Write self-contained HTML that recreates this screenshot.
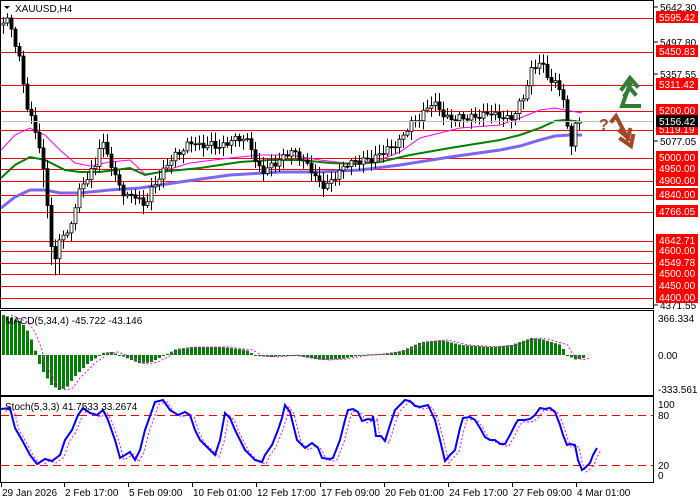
<!DOCTYPE html>
<html><head><meta charset="utf-8"><style>
html,body{margin:0;padding:0;background:#fff;width:700px;height:500px;overflow:hidden}
svg{display:block;font-family:"Liberation Sans",sans-serif}
</style></head><body>
<svg id="s" width="700" height="500" viewBox="0 0 700 500" xmlns="http://www.w3.org/2000/svg">
<rect width="700" height="500" fill="#fff"/>
<g id="lines"></g>
<g id="ma"></g>
<g id="candles"></g>
<g id="macd"></g>
<g id="stoch"></g>
<g fill="none" stroke="#000" stroke-width="1">
<rect x="0.5" y="0.5" width="653" height="308"/>
<rect x="0.5" y="310.5" width="653" height="85"/>
<rect x="0.5" y="396.5" width="653" height="86"/>
</g>
<line x1="1" y1="121.5" x2="653" y2="121.5" stroke="#c0c0c0"/>
<g id="labels" font-size="10"></g>
<text x="15" y="12" font-size="10" fill="#000">XAUUSD,H4</text>
<path d="M4,6 L10,6 L7,9Z" fill="#000"/>
<text x="5" y="324" font-size="10">MACD(5,34,4) -45.722 -43.146</text>
<text x="5" y="410" font-size="10">Stoch(5,3,3) 41.7533 33.2674</text>
<g fill="none" stroke="#2e7d32" stroke-width="4" stroke-linejoin="miter" stroke-linecap="square">
<path d="M639,106 L622,106 L630,84"/>
<path d="M622,89 L630,78 L637,86"/>
<path d="M625,95 L630,88 L635,94"/>
</g>
<text x="599" y="130" font-size="16" font-weight="bold" fill="#a0472a">?</text>
<g fill="none" stroke="#a0472a" stroke-width="4" stroke-linejoin="miter" stroke-linecap="square">
<path d="M612,121 L616,116 L628,139"/>
<path d="M621,139 L631,146 L633,136"/>
<path d="M620,131 L628,138 L630,130"/>
</g>
</svg>
<script>
(function(){
var NS="http://www.w3.org/2000/svg";
function el(p,t,a,txt){var e=document.createElementNS(NS,t);for(var k in a)e.setAttribute(k,a[k]);if(txt!==undefined)e.textContent=txt;document.getElementById(p).appendChild(e);return e;}
function interp(pts,x){if(x<=pts[0][0])return pts[0][1];for(var i=1;i<pts.length;i++){if(x<=pts[i][0]){var a=pts[i-1],b=pts[i];return a[1]+(b[1]-a[1])*(x-a[0])/(b[0]-a[0]);}}return pts[pts.length-1][1];}
function poly(p,pts,attrs){var d="M"+pts.map(function(q){return q[0]+","+q[1]}).join(" L");attrs.d=d;attrs.fill="none";el(p,"path",attrs);}
var hl=[18,52,85,111,130,158,169,181,195,212,241,251,263,274,286,298];
hl.forEach(function(y){el("lines","line",{x1:1,x2:653,y1:y+.5,y2:y+.5,stroke:"#f00","stroke-width":1});});
poly("ma",[[1,150],[15,135],[30,128],[45,135],[60,150],[75,163],[90,166],[110,162],[130,160],[145,174],[160,172],[190,163],[230,158],[260,155],[290,155],[320,160],[345,163],[360,162],[380,160],[400,152],[420,138],[460,128],[500,125],[520,118],[540,110],[555,108],[565,110],[582,113]],{stroke:"#f0f","stroke-width":1});
poly("ma",[[1,178],[15,165],[30,157],[45,160],[65,170],[80,172],[100,172],[130,168],[145,175],[160,172],[200,168],[240,162],[270,160],[300,160],[330,163],[355,164],[380,162],[410,155],[450,148],[500,140],[520,135],[540,128],[555,121],[565,120],[582,122]],{stroke:"#008000","stroke-width":2});
poly("ma",[[1,208],[15,197],[30,190],[45,190],[60,193],[80,193],[110,190],[140,188],[180,182],[230,175],[280,172],[320,172],[360,170],[400,165],[450,157],[500,150],[520,146],[540,140],[555,136],[570,135],[582,135]],{stroke:"#7b68ee","stroke-width":3});
var price=[[2,25],[6,20],[10,28],[14,40],[18,48],[22,75],[26,100],[30,110],[34,130],[38,140],[42,165],[46,200],[50,240],[54,270],[58,245],[62,230],[66,235],[70,225],[74,205],[78,190],[85,180],[95,170],[100,145],[105,150],[110,162],[115,175],[120,182],[125,195],[132,192],[140,205],[145,210],[150,195],[155,185],[160,175],[168,158],[175,152],[183,150],[190,145],[200,150],[210,142],[220,143],[230,140],[240,142],[250,146],[256,165],[262,168],[270,162],[280,160],[290,155],[300,160],[310,165],[318,178],[325,185],[332,182],[340,175],[348,165],[356,160],[365,155],[372,157],[380,155],[390,152],[398,145],[405,130],[410,120],[418,116],[425,110],[432,105],[438,112],[445,120],[452,118],[460,113],[467,115],[474,116],[481,120],[488,116],[495,117],[502,115],[510,115],[516,108],[520,100],[525,95],[530,75],[535,70],[540,65],[545,72],[550,80],[555,80],[560,84],[563,96],[566,115],[569,150],[572,140],[575,125],[578,130],[582,120]];
var prev=interp(price,2);
for(var x=3;x<=582;x+=4){
 var c=interp(price,x)+Math.sin(x*1.7)*4+Math.sin(x*0.53)*3;
 var o=prev; prev=c;
 var tp=Math.min(o,c),bt=Math.max(o,c);
 var hi=tp-2-Math.abs(Math.sin(x*2.3))*7, lo=bt+2+Math.abs(Math.cos(x*1.1))*7;
 if(x>40&&x<60)lo+=10;
 el("candles","line",{x1:x+.5,x2:x+.5,y1:hi,y2:lo,stroke:"#000","stroke-width":1});
 var h=Math.max(bt-tp,1);
 el("candles","rect",{x:x-1,y:tp,width:3,height:h,fill:(c<o?"#fff":"#000"),stroke:"#000","stroke-width":0.8});
}
var mz=355;
var mp=[[3,315],[10,318],[20,322],[27,332],[33,347],[37,362],[42,372],[50,385],[58,390],[65,388],[72,378],[80,370],[88,362],[95,358],[100,353],[110,352],[118,355],[130,360],[140,364],[150,362],[160,357],[175,349],[190,347],[220,347],[245,350],[255,356],[270,357],[290,355],[320,360],[340,359],[360,355],[380,354],[400,351],[420,342],[440,340],[460,345],[490,347],[510,345],[530,338],[540,339],[560,345],[565,355],[575,360],[582,358]];
for(var x2=2;x2<=582;x2+=4){var v=interp(mp,x2);var t=Math.min(v,mz),b=Math.max(v,mz);el("macd","rect",{x:x2,y:t,width:3,height:Math.max(b-t,1),fill:"#008000"});}
poly("macd",mp.map(function(p){return [p[0]+8,p[1]];}),{stroke:"#f0f","stroke-width":1,"stroke-dasharray":"2,2"});
[415.5,465.5].forEach(function(y){el("stoch","line",{x1:1,x2:653,y1:y,y2:y,stroke:"#e00","stroke-width":1,"stroke-dasharray":"8,5"});});
var st=[[1,409],[10,408],[15,428],[22,440],[30,455],[37,464],[45,459],[52,461],[60,455],[65,440],[72,430],[78,415],[83,408],[90,413],[97,415],[103,410],[108,420],[115,440],[120,458],[125,455],[130,452],[135,460],[140,450],[145,430],[155,402],[163,400],[170,410],[178,415],[185,412],[190,415],[195,430],[200,440],[205,445],[210,450],[215,455],[220,440],[225,413],[230,418],[235,430],[240,440],[245,450],[255,460],[262,462],[265,455],[272,445],[278,430],[282,418],[285,405],[290,412],[297,440],[305,448],[312,443],[318,448],[322,458],[330,459],[333,458],[340,440],[345,420],[348,410],[353,409],[358,412],[362,421],[368,419],[372,420],[373,416],[376,436],[381,436],[385,441],[390,425],[395,410],[400,405],[405,400],[410,401],[415,406],[420,407],[428,405],[435,420],[440,440],[445,461],[450,455],[455,450],[460,428],[463,418],[470,417],[475,420],[480,428],[485,437],[490,440],[495,440],[500,444],[505,444],[510,435],[515,425],[518,420],[525,420],[530,419],[535,415],[540,408],[545,409],[550,408],[555,412],[560,425],[563,435],[567,445],[570,444],[575,445],[578,460],[582,470],[586,467],[590,463],[593,455],[597,448]];
poly("stoch",st.map(function(p){return [p[0]+4,p[1]+2];}),{stroke:"#f0f","stroke-width":1,"stroke-dasharray":"2,2"});
poly("stoch",st,{stroke:"#00f","stroke-width":2});
var red=[["5595.42",17],["5450.83",51],["5311.42",84],["5200.00",110],["5119.19",129],["5000.00",157],["4950.00",168],["4900.00",180],["4840.00",194],["4766.05",211],["4642.71",240],["4600.00",250],["4549.78",262],["4500.00",273],["4450.00",285],["4400.00",297]];
var ax=[["5642.30",7],["5497.80",42],["5357.55",74],["5077.05",141],["4371.55",305]];
ax.forEach(function(a){el("labels","line",{x1:654,x2:658,y1:a[1],y2:a[1],stroke:"#000"});el("labels","text",{x:660,y:a[1]+4},a[0]);});
red.forEach(function(a){el("labels","rect",{x:656,y:a[1]-6,width:42,height:12,fill:"#f00"});el("labels","text",{x:659,y:a[1]+4,fill:"#fff"},a[0]);});
el("labels","rect",{x:656,y:115,width:42,height:12,fill:"#000"});el("labels","text",{x:659,y:125,fill:"#fff"},"5156.42");
[["366.334",318],["0.00",355],["-333.561",389]].forEach(function(a){el("labels","text",{x:658,y:a[1]+4},a[0]);});
[["100",404],["80",415],["20",465],["0",475]].forEach(function(a){el("labels","text",{x:658,y:a[1]+4},a[0]);});
var tl=[["29 Jan 2026",2],["2 Feb 17:00",65],["5 Feb 09:00",129],["10 Feb 01:00",193],["12 Feb 17:00",257],["17 Feb 09:00",321],["20 Feb 01:00",385],["24 Feb 17:00",449],["27 Feb 09:00",513],["4 Mar 01:00",577]];
tl.forEach(function(a){el("labels","line",{x1:a[1]-0.5,x2:a[1]-0.5,y1:483,y2:487,stroke:"#000"});el("labels","text",{x:a[1],y:496},a[0]);});
})();
</script>
</body></html>
